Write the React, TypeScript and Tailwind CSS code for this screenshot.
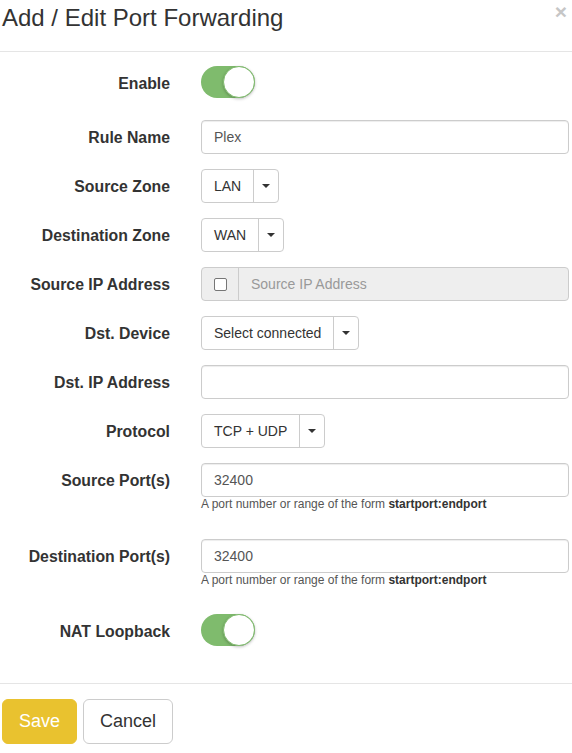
import type { ReactNode } from "react";

function FieldLabel({ children }: { children: ReactNode }) {
  return (
    <label className="h-[34px] w-[170px] shrink-0 pt-[2px] text-right text-[15.8px] font-bold leading-[32px] text-[#333]">
      {children}
    </label>
  );
}

function Row({ label, children, className = "" }: { label: string; children: ReactNode; className?: string }) {
  return (
    <div className={`flex items-start gap-[31px] pr-[3px] ${className}`}>
      <FieldLabel>{label}</FieldLabel>
      <div className="min-w-0 flex-1">{children}</div>
    </div>
  );
}

function Toggle() {
  return (
    <div className="relative h-[32px] w-[54px] rounded-full bg-[#7fbb6d]">
      <span className="absolute right-0 top-0 h-[32px] w-[32px] rounded-full border border-[#7fbb6d] bg-white shadow-[0_1px_3px_rgba(0,0,0,0.25)]" />
    </div>
  );
}

function TextInput({ value = "" }: { value?: string }) {
  return (
    <div className="flex h-[34px] items-center rounded-[4px] border border-[#ccc] bg-white px-[12px] text-[14px] text-[#555] shadow-[inset_0_1px_1px_rgba(0,0,0,0.075)]">
      {value}
    </div>
  );
}

function Dropdown({ value }: { value: string }) {
  return (
    <div className="inline-flex h-[34px] rounded-[4px] border border-[#ccc] bg-white text-[14px] text-[#333]">
      <span className="flex items-center px-[12px]">{value}</span>
      <span className="flex items-center border-l border-[#ccc] px-[8px]">
        <span className="h-0 w-0 border-x-[4px] border-t-[4px] border-x-transparent border-t-[#333]" />
      </span>
    </div>
  );
}

function Help() {
  return (
    <p className="text-[12px] leading-[15px] text-[#555]">
      A port number or range of the form <b className="text-[#333]">startport:endport</b>
    </p>
  );
}

export default function App() {
  return (
    <div className="h-[753px] w-[572px] overflow-hidden bg-white font-['Liberation_Sans',Arial,sans-serif]">
      <div className="flex h-[52px] items-start justify-between border-b border-[#e5e5e5]">
        <h4 className="mt-[5px] pl-[2px] text-[24px] leading-[26px] text-[#333]">Add / Edit Port Forwarding</h4>
        <button className="mt-[1px] pr-[5px] text-[21px] font-bold leading-[21px] text-[#c6c6c6]">×</button>
      </div>

      <div className="flex flex-col pt-[14px]">
        <Row label="Enable">
          <Toggle />
        </Row>
        <Row label="Rule Name" className="mt-[20px]">
          <TextInput value="Plex" />
        </Row>
        <Row label="Source Zone" className="mt-[15px]">
          <Dropdown value="LAN" />
        </Row>
        <Row label="Destination Zone" className="mt-[15px]">
          <Dropdown value="WAN" />
        </Row>
        <Row label="Source IP Address" className="mt-[15px]">
          <div className="flex h-[34px] rounded-[4px] border border-[#ccc] bg-[#eee]">
            <span className="flex w-[37px] items-center justify-center border-r border-[#ccc]">
              <span className="h-[13px] w-[13px] rounded-[2px] border border-[#767676] bg-white" />
            </span>
            <span className="flex items-center px-[12px] text-[14px] text-[#999]">Source IP Address</span>
          </div>
        </Row>
        <Row label="Dst. Device" className="mt-[15px]">
          <Dropdown value="Select connected" />
        </Row>
        <Row label="Dst. IP Address" className="mt-[15px]">
          <TextInput />
        </Row>
        <Row label="Protocol" className="mt-[15px]">
          <Dropdown value="TCP + UDP" />
        </Row>
        <Row label="Source Port(s)" className="mt-[15px]">
          <TextInput value="32400" />
          <Help />
        </Row>
        <Row label="Destination Port(s)" className="mt-[27px]">
          <TextInput value="32400" />
          <Help />
        </Row>
        <Row label="NAT Loopback" className="mt-[26px]">
          <Toggle />
        </Row>
      </div>

      <div className="mt-[35px] flex gap-[6px] border-t border-[#e5e5e5] pl-[2px] pt-[15px]">
        <button className="h-[45px] rounded-[6px] border border-[#e9c22f] bg-[#e9c22f] px-[16px] text-[18px] text-white">
          Save
        </button>
        <button className="h-[45px] rounded-[6px] border border-[#ccc] bg-white px-[16px] text-[18px] text-[#333]">
          Cancel
        </button>
      </div>
    </div>
  );
}
